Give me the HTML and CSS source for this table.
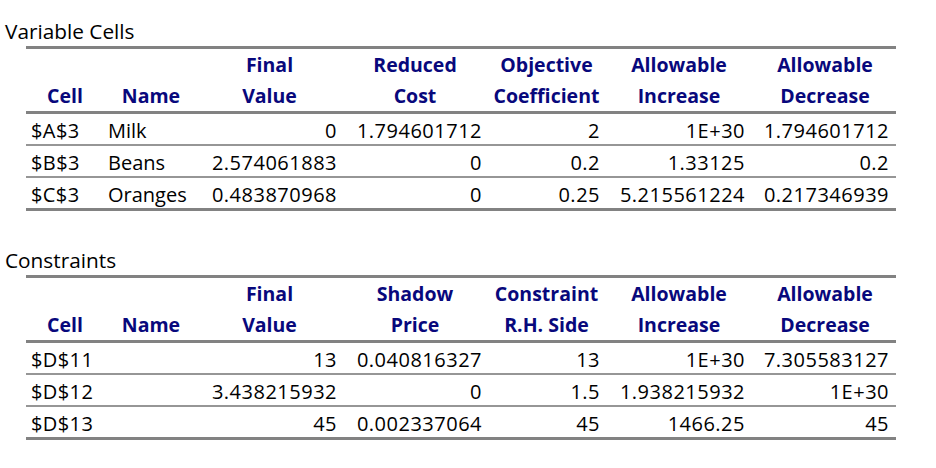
FILE: index.html
```html
<!DOCTYPE html>
<html>
<head>
<meta charset="utf-8">
<link rel="stylesheet" href="styles.css">
</head>
<body>
<main class="report">
  <section class="block">
    <div class="title">Variable Cells</div>
    <table class="sens">
      <colgroup>
        <col class="c-cell"><col class="c-name"><col class="c-final"><col class="c-red"><col class="c-obj"><col class="c-inc"><col class="c-dec">
      </colgroup>
      <thead>
        <tr>
          <th>Cell</th>
          <th>Name</th>
          <th>Final<br>Value</th>
          <th>Reduced<br>Cost</th>
          <th>Objective<br>Coefficient</th>
          <th>Allowable<br>Increase</th>
          <th>Allowable<br>Decrease</th>
        </tr>
      </thead>
      <tbody>
        <tr><td>$A$3</td><td>Milk</td><td>0</td><td>1.794601712</td><td>2</td><td>1E+30</td><td>1.794601712</td></tr>
        <tr><td>$B$3</td><td>Beans</td><td>2.574061883</td><td>0</td><td>0.2</td><td>1.33125</td><td>0.2</td></tr>
        <tr><td>$C$3</td><td>Oranges</td><td>0.483870968</td><td>0</td><td>0.25</td><td>5.215561224</td><td>0.217346939</td></tr>
      </tbody>
    </table>
  </section>
  <section class="block second">
    <div class="title">Constraints</div>
    <table class="sens">
      <colgroup>
        <col class="c-cell"><col class="c-name"><col class="c-final"><col class="c-red"><col class="c-obj"><col class="c-inc"><col class="c-dec">
      </colgroup>
      <thead>
        <tr>
          <th>Cell</th>
          <th>Name</th>
          <th>Final<br>Value</th>
          <th>Shadow<br>Price</th>
          <th>Constraint<br>R.H. Side</th>
          <th>Allowable<br>Increase</th>
          <th>Allowable<br>Decrease</th>
        </tr>
      </thead>
      <tbody>
        <tr><td>$D$11</td><td></td><td>13</td><td>0.040816327</td><td>13</td><td>1E+30</td><td>7.305583127</td></tr>
        <tr><td>$D$12</td><td></td><td>3.438215932</td><td>0</td><td>1.5</td><td>1.938215932</td><td>1E+30</td></tr>
        <tr><td>$D$13</td><td></td><td>45</td><td>0.002337064</td><td>45</td><td>1466.25</td><td>45</td></tr>
      </tbody>
    </table>
  </section>
</main>
</body>
</html>
```

FILE: styles.css
```css
html, body {
  margin: 0;
  padding: 0;
  background: #ffffff;
}

body {
  font-family: "Open Sans", "Noto Sans", sans-serif;
  font-size: 20px;
  color: #000000;
}

.report {
  padding: 15px 0 0 0;
}

.block.second {
  margin-top: 33px;
}

.title {
  padding-left: 5px;
  font-size: 20.8px;
  line-height: 32px;
  height: 31px;
}

.sens {
  margin-left: 26px;
  width: 870px;
  table-layout: fixed;
  border-collapse: separate;
  border-spacing: 0;
  border-top: 3px solid #828282;
}

.c-cell { width: 78px; }
.c-name { width: 94px; }
.c-final { width: 143px; }
.c-red { width: 148px; }
.c-obj { width: 115px; }
.c-inc { width: 150px; }
.c-dec { width: 142px; }

.sens th {
  font-weight: 700;
  font-size: 19.5px;
  color: #08087c;
  line-height: 31px;
  padding: 0;
  text-align: center;
  vertical-align: bottom;
  border-bottom: 3px solid #828282;
  white-space: nowrap;
}

.sens td {
  padding: 3px 0 0 0;
  line-height: 27px;
  text-align: right;
  letter-spacing: 0.5px;
  border-bottom: 2px solid #969696;
  white-space: nowrap;
}

.sens tbody tr:last-child td {
  border-bottom: 3px solid #828282;
}

.sens td:nth-child(1) {
  text-align: left;
  padding-left: 5px;
  letter-spacing: 0.4px;
}

.sens td:nth-child(2) {
  text-align: left;
  padding-left: 4px;
  letter-spacing: 0;
}

.sens td:nth-child(3) { padding-right: 4px; }
.sens td:nth-child(4) { padding-right: 7px; }
.sens td:nth-child(5) { padding-right: 4px; }
.sens td:nth-child(6) { padding-right: 9px; }
.sens td:nth-child(7) { padding-right: 7px; }
```
